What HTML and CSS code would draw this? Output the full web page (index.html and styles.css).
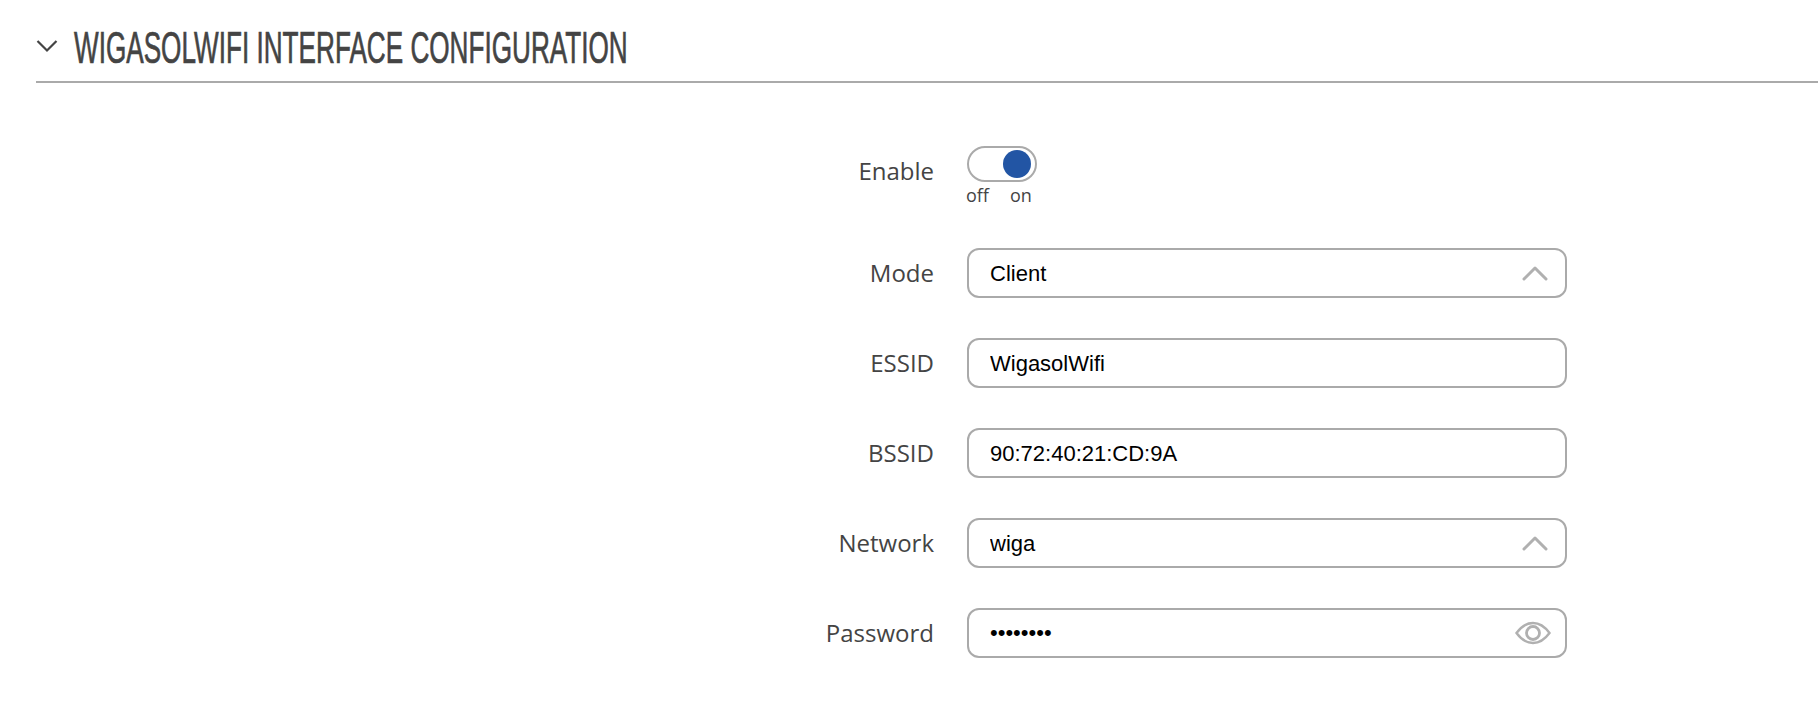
FILE: index.html
```html
<!DOCTYPE html>
<html lang="en">
<head>
    <meta charset="UTF-8">
    <title>WigasolWifi Interface Configuration</title>
    <link rel="stylesheet" href="styles.css">
</head>
<body>
    <div class="section-head">
        <svg class="head-arrow" width="22" height="14" viewBox="0 0 22 14">
            <path d="M1.5 2 L11 11.5 L20.5 2" fill="none" stroke="#444" stroke-width="2.2"/>
        </svg>
        <h2 class="section-title">WIGASOLWIFI INTERFACE CONFIGURATION</h2>
    </div>

    <form class="config-form">
        <div class="form-row toggle-row">
            <label class="form-label">Enable</label>
            <div>
                <div class="toggle"><span class="toggle-knob"></span></div>
                <div class="toggle-labels"><span>off</span><span>on</span></div>
            </div>
        </div>

        <div class="form-row">
            <label class="form-label">Mode</label>
            <div class="field">
                <select class="field-input"><option>Client</option></select>
                <svg class="field-arrow" width="26" height="16" viewBox="0 0 26 16">
                    <path d="M2 14 L13 3 L24 14" fill="none" stroke="#b0b0b0" stroke-width="3" stroke-linecap="round" stroke-linejoin="round"/>
                </svg>
            </div>
        </div>

        <div class="form-row">
            <label class="form-label">ESSID</label>
            <div class="field"><input class="field-input" type="text" value="WigasolWifi"></div>
        </div>

        <div class="form-row">
            <label class="form-label">BSSID</label>
            <div class="field"><input class="field-input" type="text" value="90:72:40:21:CD:9A"></div>
        </div>

        <div class="form-row">
            <label class="form-label">Network</label>
            <div class="field">
                <select class="field-input"><option>wiga</option></select>
                <svg class="field-arrow" width="26" height="16" viewBox="0 0 26 16">
                    <path d="M2 14 L13 3 L24 14" fill="none" stroke="#b0b0b0" stroke-width="3" stroke-linecap="round" stroke-linejoin="round"/>
                </svg>
            </div>
        </div>

        <div class="form-row">
            <label class="form-label">Password</label>
            <div class="field">
                <input class="field-input" type="password" value="password">
                <svg class="field-eye" width="36" height="24" viewBox="0 0 36 24">
                    <path d="M1.5 12 C7 4.5 12 2 18 2 C24 2 29 4.5 34.5 12 C29 19.5 24 22 18 22 C12 22 7 19.5 1.5 12 Z" fill="none" stroke="#b0b0b0" stroke-width="2.4"/>
                    <circle cx="18" cy="12" r="6.5" fill="none" stroke="#b0b0b0" stroke-width="2.8"/>
                </svg>
            </div>
        </div>
    </form>
</body>
</html>
```

FILE: styles.css
```css
body {
    margin: 0;
    background-color: #fff;
    font-family: "Open Sans", "Liberation Sans", sans-serif;
    color: #444;
    overflow-x: hidden;
}
.section-head {
    display: flex;
    align-items: center;
    margin-left: 36px;
    height: 83px;
    border-bottom: 2px solid #aaa;
    box-sizing: border-box;
}
.head-arrow {
    flex: none;
    margin-right: 16px;
    margin-top: 10px;
}
.section-title {
    margin: 14px 0 0;
    font-family: "Liberation Sans", Arial, sans-serif;
    font-size: 44px;
    font-weight: normal;
    -webkit-text-stroke: 0.7px #444;
    color: #444;
    white-space: nowrap;
    transform: scaleX(0.594);
    transform-origin: left center;
}
.config-form {
    padding-top: 63px;
}
.form-row {
    display: flex;
    align-items: center;
    margin-bottom: 40px;
}
.toggle-row {
    align-items: flex-start;
    margin-bottom: 41px;
}
.toggle-row .form-label {
    line-height: 32px;
    padding-top: 9px;
    padding-bottom: 0;
}
.form-label {
    width: 934px;
    margin-right: 33px;
    padding-bottom: 2px;
    text-align: right;
    font-size: 24px;
    color: #444;
}
.toggle {
    width: 70px;
    height: 36px;
    border: 2px solid #aaa;
    border-radius: 18px;
    box-sizing: border-box;
    display: flex;
    align-items: center;
    justify-content: flex-end;
    padding-right: 4px;
}
.toggle-knob {
    width: 28px;
    height: 28px;
    border-radius: 50%;
    background-color: #2255a4;
}
.toggle-labels {
    display: flex;
    gap: 21px;
    font-size: 18px;
    line-height: 24px;
    margin-top: 1px;
    margin-left: -1px;
}
.field {
    display: flex;
    align-items: center;
    width: 600px;
    height: 50px;
    border: 2px solid #aaa;
    border-radius: 12px;
    box-sizing: border-box;
    padding: 0 14px 0 21px;
}
.field-input {
    flex: 1;
    min-width: 0;
    padding: 0;
    border: none;
    outline: none;
    background: none;
    appearance: none;
    font-family: "Liberation Sans", Arial, sans-serif;
    font-size: 22px;
    color: #000;
}
input[type="text"] {
    padding-top: 2px;
}
.field-arrow {
    margin-right: 3px;
}
```
